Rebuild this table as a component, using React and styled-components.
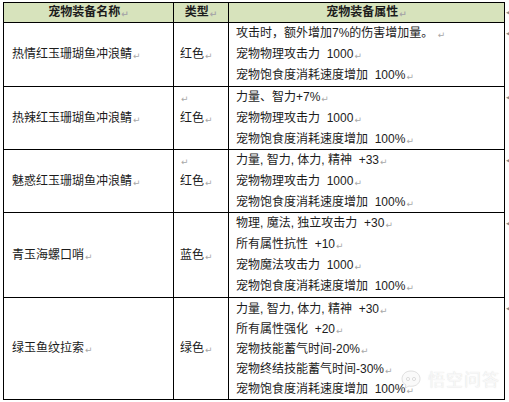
import React from 'react';
import styled, { createGlobalStyle } from 'styled-components';

const ROW_HEIGHTS = [20, 64, 63, 63, 85, 102];

const GlobalStyle = createGlobalStyle`
  html, body {
    margin: 0;
    padding: 0;
    background: #ffffff;
  }
  body {
    font-family: "Liberation Sans", "Noto Sans CJK SC", sans-serif;
  }
`;

const Page = styled.div`
  position: relative;
  width: 509px;
  height: 402px;
  padding: 2px 0 0 3px;
  box-sizing: border-box;
  overflow: hidden;
  display: flex;
  align-items: flex-start;
`;

const Grid = styled.div`
  display: grid;
  grid-template-columns: 170px 55px 276px;
  grid-template-rows: ${ROW_HEIGHTS.map((h) => `${h}px`).join(' ')};
  border-top: 1px solid #000;
  border-left: 1px solid #000;
  color: #1c1c1c;
  font-size: 12px;
`;

const Cell = styled.div`
  box-sizing: border-box;
  border-right: 1px solid #000;
  border-bottom: 1px solid #000;
  display: flex;
  flex-direction: column;
  justify-content: ${(p) => (p.top ? 'flex-start' : 'center')};
  align-items: ${(p) => (p.center ? 'center' : 'flex-start')};
  padding-left: ${(p) => p.pad || 0}px;
  overflow: hidden;
`;

const HeadCell = styled(Cell)`
  background: #d7e3bc;
  font-weight: 700;
`;

const Line = styled.div`
  height: ${(p) => p.lh || 21}px;
  line-height: ${(p) => p.lh || 21}px;
  flex: none;
  white-space: pre;
`;

const Mark = styled.span`
  font-family: "DejaVu Sans", sans-serif;
  font-size: 9px;
  line-height: 1;
  color: #a8a8a8;
  margin-left: 1px;
  vertical-align: -1px;
`;

const EndMarks = styled.div`
  display: grid;
  grid-template-rows: ${ROW_HEIGHTS.map((h) => `${h}px`).join(' ')};
  padding-top: 1px;
  width: 6px;
  overflow: hidden;
`;

const EndMark = styled.div`
  font-family: "DejaVu Sans", sans-serif;
  font-size: 9px;
  line-height: ${(p) => p.lh || 21}px;
  color: #8a8a8a;
  padding-left: 1px;
`;

const Watermark = styled.div`
  position: absolute;
  left: 400px;
  top: 366px;
  display: flex;
  align-items: center;
  gap: 6px;
  font-size: 17px;
  font-family: "Noto Sans CJK SC", sans-serif;
  color: rgba(250, 250, 250, 0.92);
  text-shadow: 0 0 1px rgba(185, 185, 185, 0.55);
  letter-spacing: 1px;
`;

const rows = [
  {
    name: '热情红玉珊瑚鱼冲浪鲭',
    type: '红色',
    attrs: ['攻击时，额外增加7%的伤害增加量。 ', '宠物物理攻击力  1000', '宠物饱食度消耗速度增加  100%'],
  },
  {
    name: '热辣红玉珊瑚鱼冲浪鲭',
    type: '红色',
    lead: true,
    attrs: ['力量、智力+7%', '宠物物理攻击力  1000', '宠物饱食度消耗速度增加  100%'],
  },
  {
    name: '魅惑红玉珊瑚鱼冲浪鲭',
    type: '红色',
    lead: true,
    attrs: ['力量, 智力, 体力, 精神  +33', '宠物物理攻击力  1000', '宠物饱食度消耗速度增加  100%'],
  },
  {
    name: '青玉海螺口哨',
    type: '蓝色',
    attrs: ['物理, 魔法, 独立攻击力  +30', '所有属性抗性  +10', '宠物魔法攻击力  1000', '宠物饱食度消耗速度增加  100%'],
  },
  {
    name: '绿玉鱼纹拉索',
    type: '绿色',
    lh: 20,
    attrs: [
      '力量, 智力, 体力, 精神  +30',
      '所有属性强化  +20',
      '宠物技能蓄气时间-20%',
      '宠物终结技能蓄气时间-30%',
      '宠物饱食度消耗速度增加  100%',
    ],
  },
];

const Ret = () => <Mark>↵</Mark>;

function LogoIcon() {
  return (
    <svg width="22" height="20" viewBox="0 0 22 20">
      <g fill="rgba(250,250,250,0.92)" stroke="rgba(185,185,185,0.55)" strokeWidth="0.8">
        <path d="M11 2 C5 2 2 6 2 10 C2 13 4 15 6 16 L5 19 L9 17 C10 17.3 10.5 17.3 11 17.3 C17 17.3 20 13.6 20 9.7 C20 5.6 16.5 2 11 2 Z" />
        <circle cx="8" cy="10" r="1.6" />
        <circle cx="14" cy="10" r="1.6" />
      </g>
    </svg>
  );
}

export default function App() {
  return (
    <>
      <GlobalStyle />
      <Page>
        <Grid>
          <HeadCell center>
            <Line lh={19}>
              宠物装备名称
              <Ret />
            </Line>
          </HeadCell>
          <HeadCell center>
            <Line lh={19}>
              类型
              <Ret />
            </Line>
          </HeadCell>
          <HeadCell center>
            <Line lh={19}>
              宠物装备属性
              <Ret />
            </Line>
          </HeadCell>
          {rows.map((row) => (
            <React.Fragment key={row.name}>
              <Cell pad={8}>
                <Line>
                  {row.name}
                  <Ret />
                </Line>
              </Cell>
              <Cell pad={6} top={row.lead}>
                {row.lead && (
                  <Line>
                    <Ret />
                  </Line>
                )}
                <Line>
                  {row.type}
                  <Ret />
                </Line>
              </Cell>
              <Cell pad={7}>
                {row.attrs.map((a) => (
                  <Line key={a} lh={row.lh}>
                    {a}
                    <Ret />
                  </Line>
                ))}
              </Cell>
            </React.Fragment>
          ))}
        </Grid>
        <EndMarks>
          <EndMark lh={19}>◂</EndMark>
          {rows.map((row) => (
            <EndMark key={row.name}>◂</EndMark>
          ))}
        </EndMarks>
        <Watermark>
          <LogoIcon />
          <span>悟空问答</span>
        </Watermark>
      </Page>
    </>
  );
}
